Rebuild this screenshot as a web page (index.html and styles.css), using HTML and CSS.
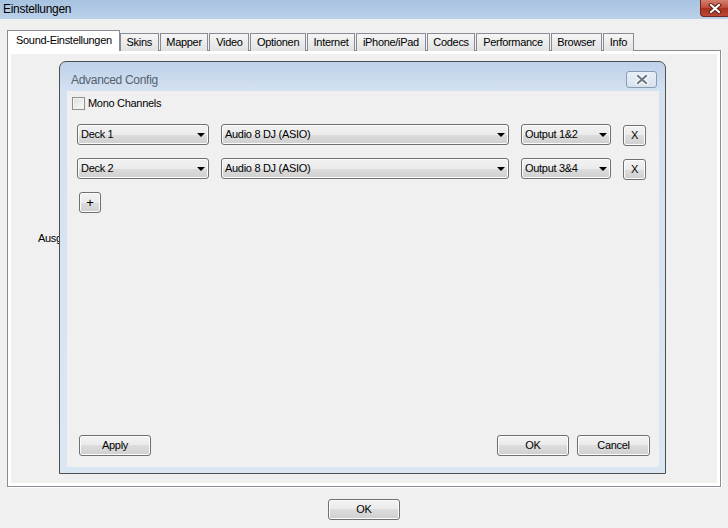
FILE: index.html
```html
<!DOCTYPE html>
<html lang="de">
<head>
    <meta charset="UTF-8">
    <meta name="viewport" content="width=device-width, initial-scale=1.0">
    <title>Einstellungen</title>
    <link rel="stylesheet" href="styles.css">
</head>
<body>
    <div id="window">
        <div class="titlebar">
            <span class="title">Einstellungen</span>
            <span class="close-btn">
                <svg width="16" height="11" viewBox="0 0 16 11">
                    <path d="M4 2 L12 9 M12 2 L4 9" stroke="#5a211c" stroke-width="4" stroke-linecap="square"/>
                    <path d="M4 2 L12 9 M12 2 L4 9" stroke="#fff" stroke-width="2" stroke-linecap="square"/>
                </svg>
            </span>
        </div>
        <div class="client">
            <div class="tabs">
                <div class="tab active">Sound-Einstellungen</div>
                <div class="tab">Skins</div>
                <div class="tab">Mapper</div>
                <div class="tab">Video</div>
                <div class="tab">Optionen</div>
                <div class="tab">Internet</div>
                <div class="tab">iPhone/iPad</div>
                <div class="tab">Codecs</div>
                <div class="tab">Performance</div>
                <div class="tab">Browser</div>
                <div class="tab">Info</div>
            </div>
            <div class="panel">
                <span class="label">Ausgabe</span>
            </div>
            <div class="footer">
                <div class="btn btn-main">OK</div>
            </div>
        </div>
    </div>

    <!-- Advanced Config Fenster liegt oben drauf -->
    <div id="dialog">
        <div class="dlg-title">
            <span>Advanced Config</span>
            <div class="dlg-close">
                <svg width="14" height="11" viewBox="0 0 14 11">
                    <path d="M3 2 L11 9 M11 2 L3 9" stroke="#fbfbfb" stroke-width="4.6" stroke-linecap="square"/>
                    <path d="M3 2 L11 9 M11 2 L3 9" stroke="#6f7986" stroke-width="2.2" stroke-linecap="square"/>
                </svg>
            </div>
        </div>
        <div class="dlg-client">
            <label class="check">
                <span class="box"></span>
                Mono Channels
            </label>
            <div class="row">
                <div class="combo deck">Deck 1</div>
                <div class="combo device">Audio 8 DJ (ASIO)</div>
                <div class="combo output">Output 1&amp;2</div>
                <div class="btn btn-x">X</div>
            </div>
            <div class="row">
                <div class="combo deck">Deck 2</div>
                <div class="combo device">Audio 8 DJ (ASIO)</div>
                <div class="combo output">Output 3&amp;4</div>
                <div class="btn btn-x">X</div>
            </div>
            <div class="btn btn-plus">+</div>
            <div class="dlg-buttons">
                <div class="btn btn-apply">Apply</div>
                <div class="btn btn-ok">OK</div>
                <div class="btn btn-cancel">Cancel</div>
            </div>
        </div>
    </div>
</body>
</html>
```

FILE: styles.css
```css
*{
    margin: 0;
    padding: 0;
    box-sizing: border-box;
}
body{
    width: 728px;
    height: 528px;
    overflow: hidden;
    position: relative;
    background-color: #f0f0f0;
    font-family: "Liberation Sans", Arial, sans-serif;
    font-size: 11px;
    color: #000;
}

/* Hauptfenster */
.titlebar{
    height: 19px;
    display: flex;
    justify-content: space-between;
    align-items: flex-start;
    padding-left: 3px;
    background: linear-gradient(#a7c2e1, #bcd1ea);
}
.title{
    font-size: 12px;
    line-height: 18px;
    letter-spacing: -0.3px;
}
.close-btn{
    display: block;
    flex: 0 0 30px;
    height: 17px;
    margin-right: -2px;
    border: 1px solid #6b2a24;
    border-top: 0;
    border-radius: 0 0 4px 4px;
    background-color: #b84232;
    background-image: linear-gradient(to bottom, #d58070 0%, #bf4a38 50%, #a9301f 51%, #bd4634 100%);
    text-align: center;
    line-height: 0;
    padding-top: 3px;
}
.client{
    padding: 11px 7px 0;
}
.tabs{
    display: flex;
    align-items: flex-end;
    gap: 1px;
    height: 21px;
    margin-bottom: -1px;
    position: relative;
    z-index: 1;
}
.tab{
    height: 18px;
    padding: 0 5.7px;
    border: 1px solid #898c95;
    border-bottom: none;
    background: linear-gradient(#f5f5f5, #e2e2e2);
    line-height: 17px;
    letter-spacing: -0.3px;
}
.tab.active{
    height: 21px;
    padding: 1px 7px 0 8px;
    margin-right: -1px;
    background: #fff;
}
.panel{
    height: 437px;
    padding: 180px 0 0 30px;
    border: 1px solid #898c95;
    background-color: #f0f0f0;
    box-shadow: inset 0 0 0 3px #fff, 1px 1px 0 #fff;
}
.label{
    line-height: 14px;
    letter-spacing: -0.3px;
}
.footer{
    display: flex;
    justify-content: center;
    padding-top: 12px;
}

/* Knöpfe und Auswahlfelder im Win7 Stil */
.btn, .combo{
    height: 21px;
    border: 1px solid #707070;
    border-radius: 3px;
    background: linear-gradient(#f2f2f2, #ebebeb 50%, #dddddd 50%, #cfcfcf);
    box-shadow: inset 0 0 0 1px #fcfcfc;
    line-height: 19px;
    letter-spacing: -0.3px;
}
.btn{
    text-align: center;
}
.btn-main{
    width: 72px;
}
.combo{
    position: relative;
    padding-left: 3px;
}
.combo::after{
    content: "";
    position: absolute;
    right: 3px;
    top: 8px;
    border-top: 4px solid #000;
    border-left: 4px solid transparent;
    border-right: 4px solid transparent;
}

/* Advanced Config */
#dialog{
    position: absolute;
    left: 59px;
    top: 61px;
    width: 607px;
    height: 413px;
    display: flex;
    flex-direction: column;
    padding: 0 6px 6px 7px;
    border: 1px solid #4f4f4f;
    border-radius: 7px 7px 0 0;
    background: linear-gradient(#bed1e9, #d3e1f1 28px, #dbe6f3);
}
.dlg-title{
    height: 29px;
    padding: 6px 2px 0 4px;
    display: flex;
    justify-content: space-between;
    align-items: center;
    font-size: 12px;
    letter-spacing: -0.3px;
    color: #56616e;
}
.dlg-close{
    width: 31px;
    height: 17px;
    border: 1px solid #8a9ab0;
    border-radius: 3px;
    background: linear-gradient(#e9eff7, #d7e2ef);
    display: flex;
    justify-content: center;
    align-items: center;
}
.dlg-client{
    flex: 1;
    display: flex;
    flex-direction: column;
    padding: 6px 9px 11px 5px;
    background-color: #f0f0f0;
}
.check{
    display: flex;
    align-items: center;
    gap: 3px;
    height: 13px;
    line-height: 13px;
    letter-spacing: -0.3px;
}
.box{
    width: 13px;
    height: 13px;
    border: 1px solid #8e8f8f;
    background: linear-gradient(135deg, #dcdcdc, #fbfbfb);
    box-shadow: inset 0 0 0 1px #f4f4f4;
}
.row{
    display: flex;
    align-items: flex-start;
    gap: 12px;
    margin: 14px 0 0 5px;
}
.row + .row{
    margin-top: 12px;
}
.deck{
    width: 132px;
}
.device{
    width: 288px;
}
.output{
    width: 90px;
}
.btn-x{
    width: 23px;
    margin-top: 1px;
}
.btn-plus{
    width: 22px;
    margin: 12px 0 0 7px;
    font-size: 13px;
}
.dlg-buttons{
    margin-top: auto;
    display: flex;
    padding-left: 7px;
}
.btn-apply{
    width: 72px;
}
.btn-ok{
    width: 72px;
    margin-left: auto;
}
.btn-cancel{
    width: 73px;
    margin-left: 8px;
}
```
